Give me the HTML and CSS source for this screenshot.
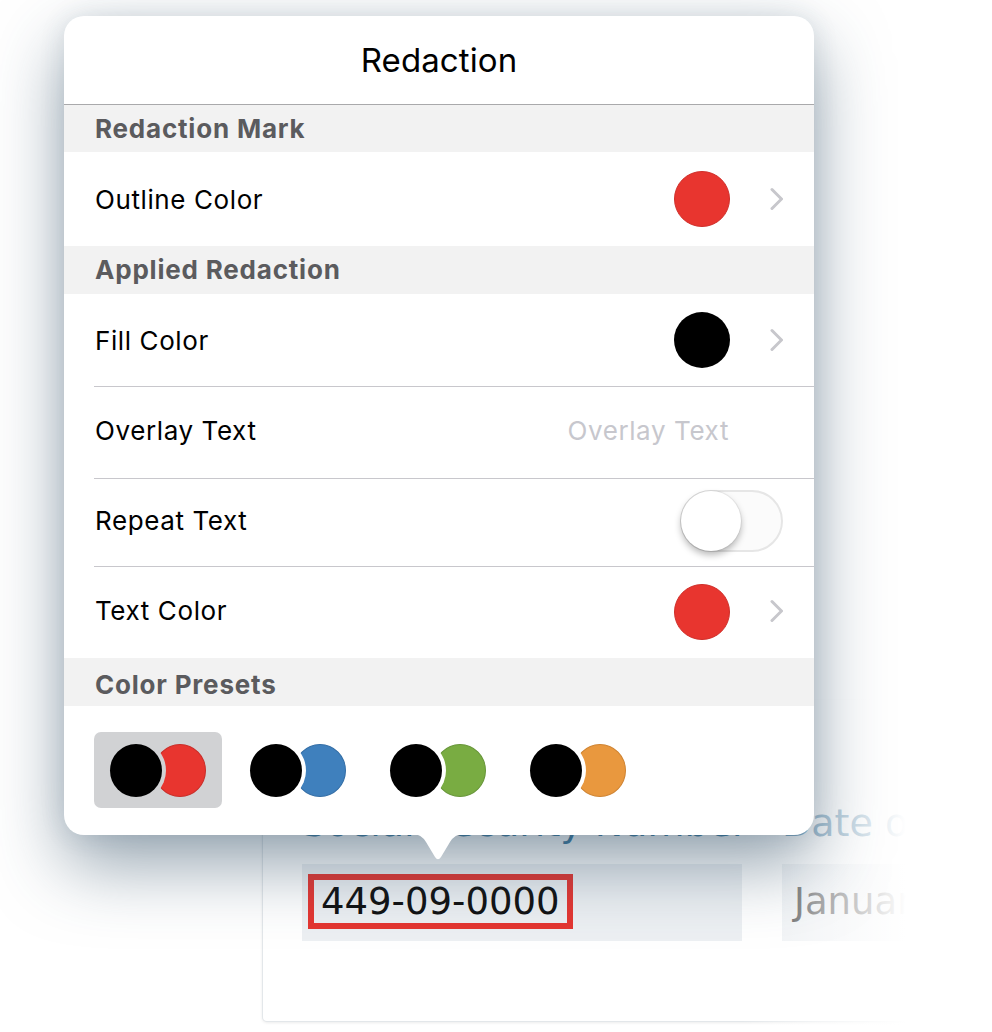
FILE: index.html
```html
<!DOCTYPE html>
<html lang="en">
<head>
<meta charset="utf-8">
<title>Redaction</title>
<link rel="stylesheet" href="styles.css">
</head>
<body>
<div class="stage">
  <div class="doc">
    <div class="card">
      <div class="col">
        <div class="label">Social Security Number</div>
        <div class="field"><span class="redact">449-09-0000</span></div>
      </div>
      <div class="col">
        <div class="label">Date of Birth</div>
        <div class="field"><span class="value">January 1, 1980</span></div>
      </div>
    </div>
  </div>

  <div class="popover">
    <div class="title">Redaction</div>

    <div class="section">Redaction Mark</div>
    <div class="row row-tall">
      <span class="row-label">Outline Color</span>
      <span class="swatch swatch-red"></span>
      <svg class="chevron" viewBox="0 0 14 24" width="14" height="24"><path d="M3 2.5 L12.5 12 L3 21.5" fill="none" stroke="#c7c7cc" stroke-width="3" stroke-linecap="round" stroke-linejoin="round"/></svg>
    </div>

    <div class="section">Applied Redaction</div>
    <div class="row">
      <span class="row-label">Fill Color</span>
      <span class="swatch swatch-black"></span>
      <svg class="chevron" viewBox="0 0 14 24" width="14" height="24"><path d="M3 2.5 L12.5 12 L3 21.5" fill="none" stroke="#c7c7cc" stroke-width="3" stroke-linecap="round" stroke-linejoin="round"/></svg>
    </div>
    <div class="row row-divided row-text">
      <span class="row-label">Overlay Text</span>
      <span class="placeholder">Overlay Text</span>
    </div>
    <div class="row row-divided row-short">
      <span class="row-label">Repeat Text</span>
      <span class="toggle"><span class="knob"></span></span>
    </div>
    <div class="row row-divided">
      <span class="row-label">Text Color</span>
      <span class="swatch swatch-red"></span>
      <svg class="chevron" viewBox="0 0 14 24" width="14" height="24"><path d="M3 2.5 L12.5 12 L3 21.5" fill="none" stroke="#c7c7cc" stroke-width="3" stroke-linecap="round" stroke-linejoin="round"/></svg>
    </div>

    <div class="section section-low">Color Presets</div>
    <div class="presets">
      <div class="preset preset-selected"><span class="dot dot-black"></span><span class="dot dot-red"></span></div>
      <div class="preset"><span class="dot dot-black"></span><span class="dot dot-blue"></span></div>
      <div class="preset"><span class="dot dot-black"></span><span class="dot dot-green"></span></div>
      <div class="preset"><span class="dot dot-black"></span><span class="dot dot-orange"></span></div>
    </div>

    <svg class="arrow" viewBox="0 0 50 27" width="50" height="27"><path d="M0 0 Q8 0 13 8 L22 23 Q25 27.5 28 23 L37 8 Q42 0 50 0 Z" fill="#fff"/></svg>
  </div>
</div>
</body>
</html>
```

FILE: styles.css
```css
* { box-sizing: border-box; }

html, body {
  margin: 0;
  padding: 0;
  background: #fff;
  overflow: hidden;
}

.stage {
  position: relative;
  width: 992px;
  height: 1032px;
  overflow: hidden;
}

/* ---------- background document ---------- */
.doc {
  padding: 700px 0 0 262px;
}

.card {
  position: relative;
  width: 900px;
  height: 322px;
  background: #fff;
  border: 1px solid #e3e7ea;
  border-top-color: transparent;
  border-radius: 5px;
  box-shadow: 0 1px 3px rgba(0, 0, 0, 0.08);
  padding: 101px 0 0 39px;
  display: flex;
  gap: 40px;
  font-family: "DejaVu Sans", Verdana, sans-serif;
}

.card::after {
  content: "";
  position: absolute;
  top: -10px;
  bottom: -12px;
  left: 478px;
  right: -12px;
  background: linear-gradient(to right,
    rgba(255, 255, 255, 0) 0,
    rgba(255, 255, 255, 0.55) 75px,
    #fff 165px);
}

.col {
  width: 440px;
  flex: none;
}

.label {
  font-size: 38px;
  line-height: 43px;
  color: #3e7ba2;
  white-space: nowrap;
}

.field {
  margin-top: 19px;
  height: 77px;
  background: #edf0f3;
  padding: 10px 0 0 6px;
}

.redact {
  display: inline-block;
  border: 6px solid #e53631;
  padding: 0 7px;
  font-size: 37px;
  line-height: 43px;
  color: #111;
}

.value {
  display: inline-block;
  padding: 6px 6px 0;
  font-size: 37px;
  line-height: 43px;
  color: #333;
  white-space: nowrap;
}

/* ---------- popover ---------- */
.popover {
  position: absolute;
  left: 64px;
  top: 16px;
  width: 750px;
  height: 819px;
  background: #fff;
  border-radius: 20px;
  box-shadow: 0 30px 70px rgba(45, 75, 100, 0.5), 0 0 26px rgba(45, 75, 100, 0.12);
  font-family: Inter, "Noto Sans", sans-serif;
  color: #000;
}

.arrow {
  position: absolute;
  left: 349px;
  top: 818px;
  display: block;
}

.title {
  height: 89px;
  line-height: 88px;
  text-align: center;
  font-size: 33px;
  letter-spacing: 0.1px;
  border-bottom: 1px solid #a9a9ab;
}

.section {
  height: 47px;
  line-height: 48px;
  background: #f2f2f2;
  padding-left: 31px;
  font-size: 26px;
  font-weight: 700;
  color: #5b5b5e;
  letter-spacing: 0.8px;
}

.section + .row + .section,
.row + .section {
  height: 48px;
}

.section-low {
  line-height: 53px;
}

.row {
  margin-left: 30px;
  padding: 0 31px 0 1px;
  height: 92px;
  display: flex;
  align-items: center;
  font-size: 26px;
  letter-spacing: 0.6px;
}

.row-tall { height: 94px; }
.row-short { height: 88px; }
.row-text { padding-right: 85px; }

.row-divided {
  border-top: 1px solid #c8c7cc;
  padding-bottom: 4px;
}

.row-label {
  flex: 1;
}

.swatch {
  width: 56px;
  height: 56px;
  border-radius: 50%;
  margin-right: 39px;
}

.row-divided .swatch {
  margin-top: 2px;
}

.swatch-red {
  background: #e8352f;
  border: 1px solid #cf2f2a;
}

.swatch-black {
  background: #000;
}

.chevron {
  display: block;
}

.placeholder {
  color: #c7c7cd;
}

.toggle {
  width: 103px;
  height: 62px;
  border: 2px solid #e6e6e6;
  border-radius: 31px;
  background: #fbfbfb;
  display: flex;
  align-items: center;
}

.knob {
  width: 60px;
  height: 60px;
  margin-left: -1px;
  border-radius: 50%;
  background: #fff;
  box-shadow: 0 4px 7px rgba(0, 0, 0, 0.28), 0 0 0 1px rgba(0, 0, 0, 0.05);
}

.presets {
  display: flex;
  gap: 12px;
  padding: 26px 30px 0;
}

.preset {
  --ring: #fff;
  width: 128px;
  height: 76px;
  border-radius: 7px;
  display: flex;
  align-items: center;
  padding-left: 16px;
}

.preset-selected {
  --ring: #d1d2d4;
  background: #d1d2d4;
}

.dot {
  width: 52px;
  height: 53px;
  border-radius: 50%;
  flex: none;
}

.dot-black {
  background: #000;
  position: relative;
  z-index: 1;
  box-shadow: 0 0 0 4px var(--ring);
}

.dot-red    { margin-left: -8px; background: #e8352f; border: 1px solid #c92e29; }
.dot-blue   { margin-left: -8px; background: #3f80bd; border: 1px solid #346ea6; }
.dot-green  { margin-left: -8px; background: #79ac42; border: 1px solid #68963a; }
.dot-orange { margin-left: -8px; background: #e9983e; border: 1px solid #cf8433; }
```
